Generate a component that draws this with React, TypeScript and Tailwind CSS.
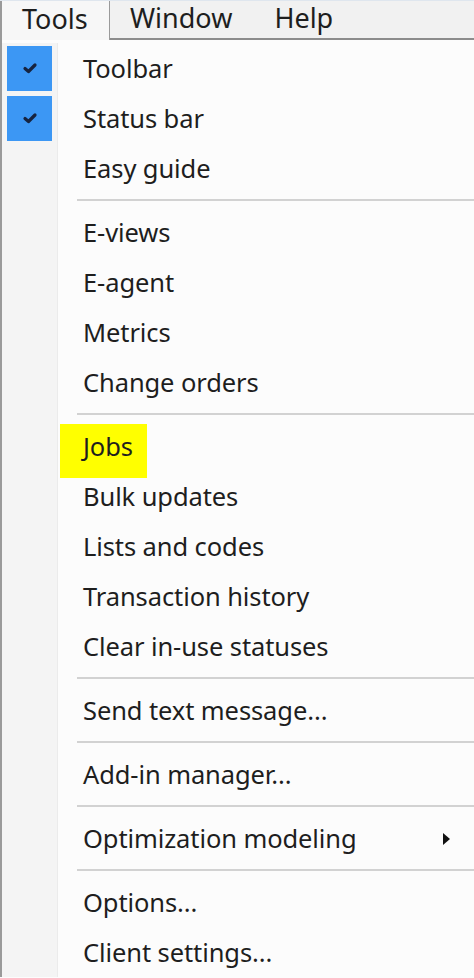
const font = { fontFamily: '"Segoe UI", "Noto Sans", "Open Sans", sans-serif' };

type Item = { label: string; checked?: boolean; highlight?: boolean; submenu?: boolean };

const groups: Item[][] = [
  [
    { label: "Toolbar", checked: true },
    { label: "Status bar", checked: true },
    { label: "Easy guide" },
  ],
  [{ label: "E-views" }, { label: "E-agent" }, { label: "Metrics" }, { label: "Change orders" }],
  [
    { label: "Jobs", highlight: true },
    { label: "Bulk updates" },
    { label: "Lists and codes" },
    { label: "Transaction history" },
    { label: "Clear in-use statuses" },
  ],
  [{ label: "Send text message..." }],
  [{ label: "Add-in manager..." }],
  [{ label: "Optimization modeling", submenu: true }],
  [{ label: "Options..." }, { label: "Client settings..." }],
];

function Check() {
  return (
    <svg width="16" height="12" viewBox="0 0 16 12">
      <path d="M3 6.5 L6.5 9.5 L13 3" fill="none" stroke="#16233f" strokeWidth="3.2" strokeLinecap="round" strokeLinejoin="round" />
    </svg>
  );
}

function Row({ item }: { item: Item }) {
  return (
    <div className="relative flex h-[50px] items-center">
      <div className="flex h-full w-[56px] shrink-0 items-center justify-center bg-[#f4f4f4] border-r border-[#ebebeb]">
        {item.checked && (
          <div className="flex h-[45px] w-[45px] items-center justify-center bg-[#3c97f4]">
            <Check />
          </div>
        )}
      </div>
      {item.highlight && <div className="absolute left-[58px] top-[3px] h-[54px] w-[87px] bg-[#ffff00]" />}
      <span className="relative pl-[25px] text-[25.5px] tracking-[-0.1px] text-[#1e1e1e]">{item.label}</span>
      {item.submenu && (
        <svg className="absolute right-[22px] top-[20px]" width="10" height="12" viewBox="0 0 10 12">
          <path d="M1 0 L8 6 L1 12 Z" fill="#111" />
        </svg>
      )}
    </div>
  );
}

function Separator() {
  return (
    <div className="flex h-[14px]">
      <div className="w-[56px] shrink-0 bg-[#f4f4f4] border-r border-[#ebebeb]" />
      <div className="flex flex-1 flex-col justify-center pl-[19px]">
        <div className="h-[2px] bg-[#d2d2d2]" />
      </div>
    </div>
  );
}

export default function App() {
  return (
    <div className="h-[978px] w-[474px] overflow-hidden bg-[#fcfcfc]" style={font}>
      <div className="flex h-[40px] items-stretch border-t border-[#dfe6ee] bg-[#f1f1f1]">
        <div className="flex w-[110px] items-center border-l-2 border-r border-[#9a9a9a] bg-[#f7f7f7] pb-[3px] pl-[20px] text-[27px] text-[#1e1e1e]">
          Tools
        </div>
        <div className="flex flex-1 items-center gap-[42px] border-b-2 border-[#8c8c8c] pb-[3px] pl-[20px] text-[27px] text-[#1e1e1e]">
          <span>Window</span>
          <span>Help</span>
        </div>
      </div>
      <div className="border-l-2 border-[#9a9a9a] pt-[3px]">
        {groups.map((g, gi) => (
          <div key={gi}>
            {gi > 0 && <Separator />}
            {g.map((it) => (
              <Row key={it.label} item={it} />
            ))}
          </div>
        ))}
      </div>
    </div>
  );
}
